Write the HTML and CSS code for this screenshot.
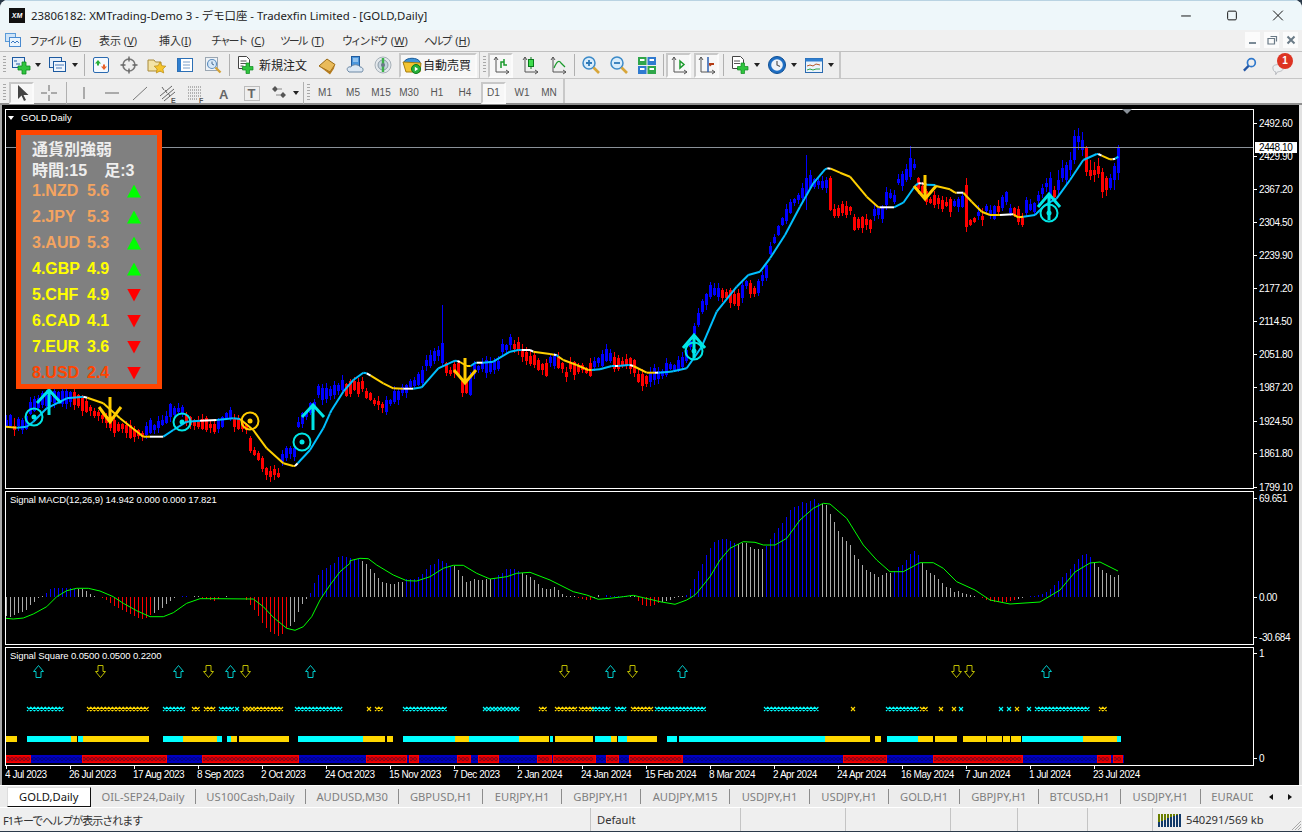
FILE: index.html
```html
<!DOCTYPE html>
<html lang="ja">
<head>
<meta charset="utf-8">
<title>MetaTrader</title>
<link rel="stylesheet" href="styles.css">
</head>
<body>
<div class="win">
  <header class="titlebar">
    <span class="applogo">XM</span>
    <span class="wintitle">23806182: XMTrading-Demo 3 - デモ口座 - Tradexfin Limited - [GOLD,Daily]</span>
    <div class="wincontrols">
      <svg class="winbtn" viewBox="0 0 46 30"><path d="M18 15.5h10" stroke="#111" fill="none"/></svg>
      <svg class="winbtn" viewBox="0 0 46 30"><rect x="18.5" y="10.5" width="9" height="9" rx="1.2" stroke="#111" fill="none"/></svg>
      <svg class="winbtn" viewBox="0 0 46 30"><path d="M18 10l10 10M28 10l-10 10" stroke="#111" fill="none"/></svg>
    </div>
  </header>

  <nav class="menubar">
    <svg class="menuicon" viewBox="0 0 16 16"><rect x=".5" y="1.5" width="10" height="8" fill="#cfe3f7" stroke="#5a9ad8"/><rect x="4.5" y="5.5" width="11" height="9" fill="#eaf4fd" stroke="#4a8ad0"/><path d="M6 11l2-2 2 2 2-2 2 2" stroke="#3a78c0" fill="none"/></svg>
    <span class="menuitem m-file"><span class="kana">ファイル</span> (<u>F</u>)</span>
    <span class="menuitem m-view">表示 (<u>V</u>)</span>
    <span class="menuitem m-ins">挿入(<u>I</u>)</span>
    <span class="menuitem m-chart"><span class="kana">チャート</span> (<u>C</u>)</span>
    <span class="menuitem m-tool"><span class="kana">ツール</span> (<u>T</u>)</span>
    <span class="menuitem m-wnd"><span class="kana">ウィンドウ</span> (<u>W</u>)</span>
    <span class="menuitem m-help"><span class="kana">ヘルプ</span> (<u>H</u>)</span>
    <div class="mdibtns">
      <span class="mdibtn"><svg viewBox="0 0 14 14"><rect x="3" y="9" width="7" height="2" fill="#7a8a96"/></svg></span>
      <span class="mdibtn"><svg viewBox="0 0 14 14"><path d="M5.5 3.5h6v5M3 5.5h6.500v5.500H3z" fill="none" stroke="#6a7a86" stroke-width="1.200"/></svg></span>
      <span class="mdibtn"><svg viewBox="0 0 14 14"><path d="M3.500 3.500l7 7M10.500 3.500l-7 7" stroke="#6a7a86" stroke-width="2"/></svg></span>
    </div>
  </nav>

  <div class="tbrow row1">
    <div class="tbgroup g1">
      <span class="grip"></span>
      <span class="tool dd"><svg class="ic" viewBox="0 0 20 20"><rect x="1.500" y="2.500" width="12" height="10" fill="#e4eefa" stroke="#1d5aa0"/><path d="M3 6h3M5 9h4" stroke="#1d5aa0"/><path d="M11 7h4v4h4v4h-4v4h-4v-4H7v-4h4z" fill="#2fc43e" stroke="#0e8a20" stroke-width=".8"/></svg><i class="caret"></i></span>
      <span class="tool dd"><svg class="ic" viewBox="0 0 20 20"><rect x="1.500" y="2.500" width="12" height="10" fill="#e4eefa" stroke="#1d5aa0"/><rect x="5.500" y="6.500" width="12" height="10" fill="#f0f6fd" stroke="#1d5aa0"/><path d="M7 10h9M8 13h6" stroke="#4a7ab8"/></svg><i class="caret"></i></span>
      <span class="sep"></span>
      <span class="tool"><svg class="ic" viewBox="0 0 20 20"><rect x="2.500" y="2.500" width="15" height="15" rx="1.500" fill="#f4f9fe" stroke="#2a6ab0"/><path d="M7 5l3 3.500H8v2H6v-2H4z" fill="#27b03a"/><path d="M13 15l-3-3.500h2v-2h2v2h2z" fill="#e8632a"/></svg></span>
      <span class="tool"><svg class="ic" viewBox="0 0 20 20"><circle cx="10" cy="10" r="6" fill="none" stroke="#777" stroke-width="1.600"/><path d="M10 1.500v5M10 13.500v5M1.500 10h5M13.500 10h5" stroke="#666" stroke-width="1.400"/></svg></span>
      <span class="tool"><svg class="ic" viewBox="0 0 20 20"><path d="M1 5h6l1.500 2H14v9H1z" fill="#f3e3a6" stroke="#a88a3a"/><path d="M13 7l1.800 3.700 4 .5-2.900 2.800.8 4-3.700-2-3.700 2 .8-4-2.900-2.800 4-.5z" fill="#f6c52d" stroke="#b88a10" stroke-width=".7"/></svg></span>
      <span class="tool"><svg class="ic" viewBox="0 0 20 20"><rect x="2.500" y="3.500" width="15" height="13" fill="#fff" stroke="#2c6fb5"/><rect x="3" y="4" width="3" height="12" fill="#2f7fd0"/><path d="M8 7h7M8 10h7M8 13h7" stroke="#7a9fc8"/></svg></span>
      <span class="tool"><svg class="ic" viewBox="0 0 20 20"><rect x="2.500" y="2.500" width="12" height="13" fill="#eef2f6" stroke="#9aa6b2"/><circle cx="9" cy="9" r="4.500" fill="#d7e8f8" stroke="#5f8fbf" stroke-width="1.200"/><path d="M9 6.500V9l2 1" stroke="#476b90" fill="none"/><path d="M12.500 12.500l5 5" stroke="#d2a23a" stroke-width="2.400"/></svg></span>
      <span class="sep"></span>
      <span class="tool order"><svg class="ic" viewBox="0 0 20 20"><path d="M3.500 1.500h8l3 3v9h-11z" fill="#fff" stroke="#444"/><path d="M5.500 6h6M5.500 8.500h6M5.500 11h3" stroke="#555"/><path d="M11 8h3.500v3.500H18V15h-3.500v3.500H11V15H7.500v-3.500H11z" fill="#2fc43e" stroke="#0e8a20" stroke-width=".7"/></svg><span class="toollabel">新規注文</span></span>
      <span class="tool"><svg class="ic" viewBox="0 0 20 20"><path d="M2 11l8-7 8 5.500-5 7.500z" fill="#e9bb5a" stroke="#9a6a14"/><path d="M2 11l11 6 5-7.500-1 4-4 6z" fill="#b47a1c"/></svg></span>
      <span class="tool"><svg class="ic" viewBox="0 0 20 20"><rect x="6.500" y="1.500" width="8" height="9" fill="#4a96dc" stroke="#1e5a9e"/><path d="M8 4h5M8 6h5" stroke="#d6ecff"/><path d="M3 16c-2-2 0-5 3-4 1-3 8-3 9 0 3 0 4 3 2 5H4z" fill="#dbe7f3" stroke="#6c88a4"/></svg></span>
      <span class="tool"><svg class="ic" viewBox="0 0 20 20"><circle cx="10" cy="10" r="8" fill="#e3e8ec" stroke="#a6b0b8"/><circle cx="10" cy="10" r="5" fill="#c4d2dc" stroke="#8c9aa6"/><path d="M10 3v14" stroke="#3db24a" stroke-width="2.400"/><circle cx="10" cy="10" r="2" fill="#6a7a88"/></svg></span>
      <span class="tool pressed auto"><svg class="ic" viewBox="0 0 20 20"><path d="M2 7c2-5 14-5 16 0v3H2z" fill="#3e93d8" stroke="#1c5c9a"/><path d="M1 7l18 1-1 9H4z" fill="#f3c532" stroke="#a77f10"/><circle cx="14" cy="14" r="4.500" fill="#27b03a" stroke="#0e7a1e"/><path d="M12.800 11.800l3.400 2.200-3.400 2.200z" fill="#fff"/></svg><span class="toollabel">自動売買</span></span>
    </div>
    <div class="tbgroup g2">
      <span class="grip"></span>
      <span class="tool pressed narrow"><svg class="ic" viewBox="0 0 20 20"><path d="M5 2v15h13" stroke="#555" fill="none"/><path d="M3 5l2-3 2 3M15 15l3 2-3 2" fill="none" stroke="#555"/><path d="M10 13V7h3M13 4v6h3" stroke="#1a9a2c" stroke-width="1.500" fill="none"/></svg></span>
      <span class="tool"><svg class="ic" viewBox="0 0 20 20"><path d="M5 2v15h13" stroke="#555" fill="none"/><path d="M3 5l2-3 2 3M15 15l3 2-3 2" fill="none" stroke="#555"/><path d="M11 2v12" stroke="#0a7a1c"/><rect x="8.500" y="4.500" width="5" height="7" fill="#3fdc4d" stroke="#0a7a1c"/></svg></span>
      <span class="tool"><svg class="ic" viewBox="0 0 20 20"><path d="M5 2v15h13" stroke="#555" fill="none"/><path d="M3 5l2-3 2 3M15 15l3 2-3 2" fill="none" stroke="#555"/><path d="M6 13c3-7 5-8 7-5l4 4" stroke="#1a9a2c" stroke-width="1.200" fill="none"/></svg></span>
      <span class="sep"></span>
      <span class="tool"><svg class="ic" viewBox="0 0 20 20"><circle cx="8" cy="8" r="6" fill="#d8ecfb" stroke="#3c8ac8" stroke-width="1.500"/><path d="M5 8h6M8 5v6" stroke="#2f7ab8" stroke-width="1.800"/><path d="M12.500 12.500l5.500 5.500" stroke="#d8a63a" stroke-width="2.600"/></svg></span>
      <span class="tool"><svg class="ic" viewBox="0 0 20 20"><circle cx="8" cy="8" r="6" fill="#d8ecfb" stroke="#3c8ac8" stroke-width="1.500"/><path d="M5 8h6" stroke="#2f7ab8" stroke-width="1.800"/><path d="M12.500 12.500l5.500 5.500" stroke="#d8a63a" stroke-width="2.600"/></svg></span>
      <span class="tool"><svg class="ic" viewBox="0 0 20 20"><rect x="1" y="2" width="8.500" height="8" fill="#2fa64a"/><rect x="10.500" y="2" width="8.500" height="8" fill="#2f7ad0"/><rect x="1" y="11" width="8.500" height="8" fill="#2f7ad0"/><rect x="10.500" y="11" width="8.500" height="8" fill="#2fa64a"/><path d="M3 5h4.500M12.500 5H17M3 14h4.500M12.500 14H17" stroke="#fff" stroke-width="2"/></svg></span>
      <span class="sep"></span>
      <span class="tool pressed narrow"><svg class="ic" viewBox="0 0 20 20"><path d="M5 2v15h13" stroke="#555" fill="none"/><path d="M3 5l2-3 2 3M15 15l3 2-3 2" fill="none" stroke="#555"/><path d="M11 6l4 3.500-4 3.500z" fill="none" stroke="#1a9a2c" stroke-width="1.500"/></svg></span>
      <span class="tool pressed narrow wide1"><svg class="ic" viewBox="0 0 20 20"><path d="M4 2v15h14" stroke="#555" fill="none"/><path d="M2 5l2-3 2 3M15 15l3 2-3 2" fill="none" stroke="#555"/><path d="M11 2v15" stroke="#2c5fb0" stroke-width="1.500"/><path d="M17 8l-4 3.500-1-1.500z" fill="#b43c14"/><path d="M12 9h5" stroke="#b43c14" stroke-width="2"/></svg></span>
      <span class="sep sep2"></span>
      <span class="tool dd"><svg class="ic" viewBox="0 0 20 20"><path d="M2.500 1.500h8l3 3v9h-11z" fill="#fff" stroke="#444"/><path d="M4 6h6M4 8.500h6" stroke="#555"/><path d="M11 8h3.500v3.500H18V15h-3.500v3.500H11V15H7.500v-3.500H11z" fill="#2fc43e" stroke="#0e8a20" stroke-width=".7"/></svg><i class="caret"></i></span>
      <span class="tool dd"><svg class="ic" viewBox="0 0 20 20"><circle cx="10" cy="10" r="8.500" fill="#1f6fc4" stroke="#0f4f94"/><circle cx="10" cy="10" r="5.800" fill="#eef3f8"/><path d="M10 6v4l3 1.500" stroke="#555" fill="none" stroke-width="1.200"/></svg><i class="caret"></i></span>
      <span class="tool dd"><svg class="ic" viewBox="0 0 20 20"><rect x="1.500" y="3.500" width="17" height="14" fill="#eaf3fb" stroke="#2a6ab0"/><rect x="1.500" y="3.500" width="17" height="3" fill="#2f7fd0"/><path d="M3 11l3-1 3 1 3-2 4 1" stroke="#b4582a" fill="none"/><path d="M3 15l3-1 3 1 3-1 4 0" stroke="#2fa64a" fill="none"/></svg><i class="caret"></i></span>
    </div>
    <div class="rightcluster">
      <svg class="searchic" viewBox="0 0 16 16"><circle cx="10" cy="6" r="4.200" fill="none" stroke="#2f78cc" stroke-width="1.800"/><path d="M7 9.500l-5 5" stroke="#2456a4" stroke-width="2.400"/></svg>
      <span class="notify">
        <svg class="bubble" viewBox="0 0 16 14"><path d="M2 5c0-3 9-4 11 0 1 4-4 5-6 5l-2 3v-3C3 10 2 8 2 5z" fill="#eef0f2" stroke="#b4b8bc"/></svg>
        <span class="badge">1</span>
      </span>
    </div>
  </div>

  <div class="tbrow row2">
    <div class="tbgroup g3">
      <span class="grip"></span>
      <span class="tool pressed narrow cursor"><svg class="ic" viewBox="0 0 20 20"><path d="M6 2l0 14 3.500-3.500 2.500 5.500 2-1-2.500-5h5z" fill="#444"/></svg></span>
      <span class="tool"><svg class="ic" viewBox="0 0 20 20"><path d="M10 2v6M10 12v6M2 10h6M12 10h6" stroke="#666"/></svg></span>
      <span class="sep sep4"></span>
      <span class="tool"><svg class="ic" viewBox="0 0 20 20"><path d="M10 4v12" stroke="#666"/></svg></span>
      <span class="tool"><svg class="ic" viewBox="0 0 20 20"><path d="M3 10h14" stroke="#666"/></svg></span>
      <span class="tool"><svg class="ic" viewBox="0 0 20 20"><path d="M3 17L17 4" stroke="#777"/></svg></span>
      <span class="tool"><svg class="ic" viewBox="0 0 20 20"><path d="M2 13L14 3M4 16L16 6M6 18L17 9M4 4l2 3M7 7l2 3M10 10l2 3" stroke="#666" fill="none"/><text x="13" y="20" class="ictext">E</text></svg></span>
      <span class="tool"><svg class="ic" viewBox="0 0 20 20"><path d="M2 4h13M2 7h13M2 10h13M2 13h13M2 16h9" stroke="#777" stroke-dasharray="1 1"/><text x="13" y="20" class="ictext">F</text></svg></span>
      <span class="tool"><svg class="ic" viewBox="0 0 20 20"><text x="5" y="15.500" class="icA">A</text></svg></span>
      <span class="tool"><svg class="ic" viewBox="0 0 20 20"><rect x="2.500" y="3.500" width="15" height="14" fill="none" stroke="#888" stroke-dasharray="1 1"/><text x="5.500" y="15" class="icA">T</text></svg></span>
      <span class="tool dd2"><svg class="ic" viewBox="0 0 20 20"><path d="M5 3l3 3-3 3-3-3zM13 9l3 3-3 3-3-3z" fill="#555"/><path d="M8 6h4M10 12H6" stroke="#888"/></svg><i class="caret"></i></span>
      <span class="sep"></span>
      <span class="grip grip2"></span>
      <span class="tf">M1</span><span class="tf">M5</span><span class="tf">M15</span><span class="tf">M30</span><span class="tf">H1</span><span class="tf">H4</span>
      <span class="tf pressed narrow tfd">D1</span><span class="tf">W1</span><span class="tf tfm">MN</span>
    </div>
  </div>

  <main class="workspace">
    <section class="pane main-pane">
      <div class="plot"><svg id="mainplot" class="plotsvg" viewBox="6 110 1247 378"></svg></div>
      <svg id="mainaxis" class="axissvg" viewBox="1254 109 45 380"></svg>
      <div class="charthead"><i class="headcaret"></i>GOLD,Daily</div>
      <svg class="shiftmark" viewBox="0 0 10 6"><path d="M0 0h10L5 5z" fill="#8a9199"/></svg>
      <aside class="strength">
        <div class="st-title">通貨別強弱</div>
        <div class="st-meta"><span>時間:15</span><span>足:3</span></div>
        <div class="st-row c-sand"><span>1.NZD</span><span>5.6</span><i class="up"></i></div>
        <div class="st-row c-sand"><span>2.JPY</span><span>5.3</span><i class="up"></i></div>
        <div class="st-row c-sand"><span>3.AUD</span><span>5.3</span><i class="up"></i></div>
        <div class="st-row c-yel"><span>4.GBP</span><span>4.9</span><i class="up"></i></div>
        <div class="st-row c-yel"><span>5.CHF</span><span>4.9</span><i class="down"></i></div>
        <div class="st-row c-yel"><span>6.CAD</span><span>4.1</span><i class="down"></i></div>
        <div class="st-row c-yel"><span>7.EUR</span><span>3.6</span><i class="down"></i></div>
        <div class="st-row c-red"><span>8.USD</span><span>2.4</span><i class="down"></i></div>
      </aside>
    </section>
    <section class="pane macd-pane">
      <div class="plot"><svg id="macdplot" class="plotsvg" viewBox="6 492 1247 152"></svg></div>
      <svg id="macdaxis" class="axissvg" viewBox="1254 491 45 154"></svg>
      <div class="panelabel">Signal MACD(12,26,9) 14.942 0.000 0.000 17.821</div>
    </section>
    <section class="pane sig-pane">
      <div class="plot"><svg id="sigplot" class="plotsvg" viewBox="6 648 1247 117"></svg></div>
      <svg id="sigaxis" class="axissvg" viewBox="1254 647 45 119"></svg>
      <div class="panelabel">Signal Square 0.0500 0.0500 0.2200</div>
    </section>
    <svg id="xaxis" class="xaxis" viewBox="5 766 1294 19"></svg>
  </main>

  <div class="tabbar">
    <span class="tab active">GOLD,Daily</span>
    <span class="tab">OIL-SEP24,Daily</span>
    <span class="tab">US100Cash,Daily</span>
    <span class="tab">AUDUSD,M30</span>
    <span class="tab">GBPUSD,H1</span>
    <span class="tab j">EURJPY,H1</span>
    <span class="tab j">GBPJPY,H1</span>
    <span class="tab j">AUDJPY,M15</span>
    <span class="tab j">USDJPY,H1</span>
    <span class="tab j">USDJPY,H1</span>
    <span class="tab">GOLD,H1</span>
    <span class="tab j">GBPJPY,H1</span>
    <span class="tab">BTCUSD,H1</span>
    <span class="tab j">USDJPY,H1</span>
    <span class="tab clipped">EURAUD</span>
    <span class="tabnav"><i class="tl"></i><i class="tr"></i></span>
  </div>

  <footer class="statusbar">
    <span class="st s-help">F1キーでヘルプが表示されます</span>
    <span class="st s-def">Default</span>
    <span class="st s-a"></span>
    <span class="st s-b"></span>
    <span class="st s-c"></span>
    <span class="st s-d"></span>
    <span class="st s-e"></span>
    <span class="st s-conn">
      <svg class="connbars" viewBox="0 0 24 14"><g id="conn"></g></svg>
      540291/569 kb
    </span>
    <svg class="sizegrip" viewBox="0 0 12 12"><path d="M11 2L2 11M11 5l-6 6M11 8l-3 3" stroke="#a8a8a8"/></svg>
  </footer>
</div>
<script src="chart.js"></script>
</body>
</html>
```
FILE: styles.css
```css
* { box-sizing: border-box; }
html, body { margin: 0; padding: 0; }
body {
  width: 1302px; height: 832px; overflow: hidden;
  background: #2b3a4a;
  font-family: "Noto Sans", "Noto Sans CJK JP", sans-serif;
}
.win {
  width: 1302px; height: 831px;
  display: flex; flex-direction: column;
  background: #eeeeee;
  border-radius: 8px 8px 0 0;
  overflow: hidden;
}

/* title bar */
.titlebar {
  height: 30px; flex: none;
  display: flex; align-items: center;
  padding: 0 0 1px 9px;
  background: #eef7fa;
  border-top: 1px solid #b9d3e2;
}
.applogo {
  width: 16px; height: 15px;
  background: #111; color: #fff;
  font: italic 700 7px/15px "Liberation Sans", sans-serif;
  text-align: center;
}
.wintitle { margin-left: 6px; font-size: 11.4px; color: #222; white-space: nowrap; }
.wincontrols { margin-left: auto; display: flex; margin-right: 1px; }
.winbtn { width: 46px; height: 29px; display: block; }

/* menu */
.menubar {
  height: 22px; flex: none;
  display: flex; align-items: center;
  padding-bottom: 1px;
  background: #f0f0f0;
  font-size: 11px; color: #333;
  border-bottom: 1px solid #c0c0c0;
}
.menuicon { width: 16px; height: 16px; margin-left: 5px; }
.menuitem { white-space: nowrap; }
.kana { letter-spacing: -2.2px; margin-right: 2px; }
.m-file { margin-left: 8px; width: 70px; }
.m-view { width: 60px; }
.m-ins { width: 52px; }
.m-chart { width: 69px; }
.m-tool { width: 62px; }
.m-wnd { width: 82px; }
.mdibtns { margin-left: auto; margin-right: 4px; display: flex; gap: 4px; }
.mdibtn { width: 15px; height: 16px; background: #fbfbfb; display: flex; align-items: center; justify-content: center; }
.mdibtn svg { width: 14px; height: 14px; }

/* toolbars */
.tbrow { flex: none; display: flex; background: #eeeeee; }
.row1 { height: 27px; border-bottom: 1px solid #c6c6c6; }
.row2 { height: 26px; border-bottom: 2px solid #8e8e8e; }
.tbgroup { display: flex; align-items: center; height: 100%; }
.g1 { width: 480px; border-right: 1px solid #c8c8c8; }
.g2 { width: 361px; border-right: 2px solid #c8c8c8; }
.g3 { width: 565px; border-right: 2px solid #c8c8c8; padding-top: 3px; }
.grip {
  width: 8px; height: 18px; flex: none;
  background: repeating-linear-gradient(#a8a8a8 0 1px, transparent 1px 3px) 3px 0 / 3px 100% no-repeat;
}
.grip2 { width: 5px; background-position: 1px 0; }
.tool {
  width: 28px; height: 25px; flex: none;
  display: flex; align-items: center; justify-content: center;
  position: relative;
}
.row2 .tool, .row2 .tf { height: 22px; }
.ic { width: 20px; height: 20px; display: block; flex: none; }
.ictext { font: 700 7px "Liberation Sans", sans-serif; fill: #555; }
.icA { font: 700 13px "Liberation Sans", sans-serif; fill: #666; }
.dd { width: 37px; justify-content: flex-start; padding-left: 3px; gap: 4px; }
.dd2 { width: 35px; justify-content: flex-start; padding-left: 4px; gap: 3px; }
.caret { width: 0; height: 0; border: 3.500px solid transparent; border-top: 4px solid #222; border-bottom: 0; flex: none; }
.sep { width: 5px; height: 22px; flex: none; background: linear-gradient(#b0b0b0,#b0b0b0) 2px 0 / 1px 100% no-repeat; }
.sep2 { width: 8px; background-position: 4px 0; }
.sep4 { width: 7px; background-position: 3px 0; }
.order { width: 81px; justify-content: flex-start; padding-left: 3px; gap: 4px; }
.toollabel { font-size: 12px; color: #222; white-space: nowrap; }
.pressed {
  background: #f7f7f7;
  border: 2px solid; border-color: #c8c8c8 #fbfbfb #fbfbfb #c8c8c8;
}
.narrow { width: 25px; margin-right: 3px; }
.cursor { margin-left: 1px; margin-right: 1px; }
.wide1 { margin-right: 0; }
.auto { width: 78px; margin-left: 2px; justify-content: flex-start; padding-left: 1px; gap: 1px; }
.tf {
  width: 28px; height: 25px; flex: none;
  display: flex; align-items: center; justify-content: center;
  font: 10px "Liberation Sans", sans-serif; color: #555;
}
.tfd { width: 25px; margin-left: 2px; margin-right: 2px; }
.tfm { margin-left: -1px; }
.rightcluster { margin-left: auto; display: flex; align-items: center; height: 25px; }
.searchic { width: 15px; height: 15px; margin-right: 14px; }
.notify { width: 26px; height: 24px; position: relative; margin-right: 5px; display: block; }
.bubble { position: absolute; left: 0; top: 9px; width: 15px; height: 14px; }
.badge {
  position: absolute; left: 6px; top: 0;
  width: 16px; height: 16px; border-radius: 50%;
  background: #dd3322; color: #fff;
  font: 700 10px/16px "Liberation Sans", sans-serif; text-align: center;
}

/* workspace */
.workspace {
  flex: none; height: 680px;
  background: #000;
  padding: 4px 0 0 3px;
  border-left: 2px solid #a8a8a8;
  border-right: 3px solid #e2e2e2;
  display: flex; flex-direction: column; gap: 2px;
}
.pane { display: flex; position: relative; flex: none; }
.main-pane { height: 380px; }
.macd-pane { height: 154px; }
.sig-pane { height: 119px; }
.plot { width: 1249px; height: 100%; border: 1px solid #fff; flex: none; }
.plotsvg { display: block; width: 100%; height: 100%; }
.axissvg { width: 45px; height: 100%; display: block; flex: none; overflow: visible; }
.xaxis { width: 1294px; height: 19px; display: block; flex: none; margin-top: -2px; }
.axislabel { font: 10px "Liberation Sans", sans-serif; fill: #fff; letter-spacing: -.4px; }
.taglabel { fill: #000; }
.datelabel { font: 10px "Liberation Sans", sans-serif; fill: #fff; letter-spacing: -.45px; }
.charthead {
  position: absolute; left: 3px; top: 3px;
  font: 9.500px/12px "Liberation Sans", sans-serif; color: #fff;
  display: flex; align-items: center; gap: 7px;
}
.headcaret { width: 0; height: 0; border: 3px solid transparent; border-top: 4px solid #fff; border-bottom: 0; }
.shiftmark { position: absolute; left: 1117px; top: 0; width: 10px; height: 6px; }
.panelabel {
  position: absolute; left: 5px; top: 3px;
  font: 9.500px/12px "Liberation Sans", sans-serif; color: #fff; letter-spacing: -.1px;
  white-space: nowrap;
}

/* currency strength panel */
.strength {
  position: absolute; left: 11px; top: 21px;
  width: 146px; height: 259px;
  background: #808080; border: 5px solid #ff4500;
  padding: 5px 0 0 11px;
  font: 700 16px/20px "Liberation Sans", "Noto Sans CJK JP", sans-serif;
}
.st-title { height: 20px; color: #eeeeee; white-space: nowrap; }
.st-meta { margin-top: 2px; height: 16px; line-height: 18px; color: #eeeeee; display: flex; gap: 17px; }
.st-row { height: 26px; display: grid; grid-template-columns: 55px 40px 14px; align-items: center; white-space: nowrap; }
.c-sand { color: #f4a460; }
.c-yel { color: #ffff00; }
.c-red { color: #ff4500; }
.up, .down { width: 14px; height: 13px; display: block; }
.up { background: #00ff00; clip-path: polygon(50% 0, 100% 100%, 0 100%); }
.down { background: #ff0000; clip-path: polygon(0 0, 100% 0, 50% 100%); }

/* tabs */
.tabbar {
  height: 23px; flex: none;
  display: flex; align-items: center;
  padding-left: 7px;
  background: #ececec;
  border-top: 1px solid #fff;
  border-bottom: 1px solid #fff;
  font-size: 11.2px; color: #808080;
  overflow: hidden; position: relative;
}
.tab { height: 15px; line-height: 15px; padding: 0 10.500px; border-right: 1px solid #8c8c8c; white-space: nowrap; flex: none; }
.tab.j { padding: 0 11.500px; }
.tab.active { height: 20px; line-height: 18px; width: 84px; padding: 0 11px; background: #fff; color: #111; border: 1px solid #111; border-top: 1px solid #ddd; border-left-color: #ddd; }
.clipped { border-right: 0; width: 52px; overflow: hidden; padding-right: 0; }
.tabnav { position: absolute; left: 1263px; top: 0; width: 39px; height: 21px; background: #ececec; display: flex; align-items: center; }
.tl, .tr { width: 0; height: 0; border: 3.500px solid transparent; }
.tl { border-right: 4px solid #111; border-left: 0; margin-left: 6px; }
.tr { border-left: 4px solid #111; border-right: 0; margin-left: 15px; }

/* status */
.statusbar {
  flex: none; height: 23px;
  display: flex; align-items: center;
  font-size: 11.2px; color: #333;
  background: #efefef;
  position: relative;
}
.st { height: 100%; display: flex; align-items: center; white-space: nowrap; flex: none; border-right: 1px solid #c4c4c4; }
.s-help { width: 591px; padding-left: 3px; letter-spacing: -1px; font-size: 11px; }
.s-def { width: 150px; padding-left: 6px; }
.s-a { width: 105px; }
.s-b { width: 105px; }
.s-c { width: 67px; }
.s-d { width: 70px; }
.s-e { width: 65px; }
.s-conn { padding-left: 5px; gap: 4px; border-right: 0; }
.connbars { width: 24px; height: 14px; display: block; }
.sizegrip { position: absolute; right: 0; bottom: 0; width: 12px; height: 12px; }
```
FILE: chart.js
```js
(function () {
  function Z(ox, oy, pts) {
    return pts.map(function (p) { return [p[0], ox + p[1] / 3, oy + p[2] / 3]; });
  }
  function rnd(seed) {
    var s = seed;
    return function () { s = (s * 1664525 + 1013904223) % 4294967296; return s / 4294967296; };
  }
  function rect(x, y, w, h, fill) {
    return '<rect x="' + x + '" y="' + y + '" width="' + w + '" height="' + h + '" fill="' + fill + '" shape-rendering="crispEdges"/>';
  }
  function poly(pts, stroke, w) {
    return '<path d="M' + pts.map(function (p) { return p[0].toFixed(1) + ' ' + p[1].toFixed(1); }).join('L') +
      '" fill="none" stroke="' + stroke + '" stroke-width="' + w + '" stroke-linejoin="round"/>';
  }
  function text(x, y, s, cls) {
    return '<text x="' + x + '" y="' + y + '" class="' + cls + '">' + s + '</text>';
  }

  /* ---------- candles ---------- */
  var BLUE = '#0000ff', RED = '#ff0000';
  var segs = [
    [6, 18, 421, 421, 'b'], [18, 28, 425, 420, 'b'], [30, 40, 408, 402, 'b'], [42, 72, 400, 396, 'b'],
    [74, 76, 400, 400, 'r'], [78, 88, 401, 408, 'r'], [90, 108, 410, 422, 'r'], [110, 144, 423, 437, 'r'],
    [146, 166, 430, 420, 'b'], [170, 182, 412, 410, 'b'], [186, 216, 420, 428, 'r'], [218, 232, 424, 412, 'b'],
    [234, 248, 421, 428, 'r'], [250, 264, 445, 465, 'r'], [266, 280, 472, 474, 'r'], [282, 296, 457, 450, 'b'],
    [298, 316, 425, 400, 'b'], [318, 328, 392, 394, 'b'], [330, 334, 392, 392, 'b'], [336, 344, 388, 385, 'b'],
    [346, 364, 388, 386, 'r'], [366, 384, 395, 408, 'r'], [386, 394, 405, 395, 'b'], [394, 406, 398, 388, 'b'],
    [406, 424, 385, 378, 'b'], [426, 440, 365, 352, 'b'], [442, 442, 353, 353, 'b'], [444, 460, 370, 370, 'r'],
    [462, 468, 388, 388, 'r'], [470, 470, 386, 386, 'b'], [474, 496, 367, 365, 'b'], [500, 510, 352, 342, 'b'],
    [512, 520, 347, 347, 'r'], [522, 546, 355, 368, 'r'], [550, 554, 360, 360, 'b'], [558, 566, 362, 373, 'r'],
    [570, 590, 367, 370, 'r'], [594, 610, 363, 355, 'b'], [614, 634, 363, 365, 'r'], [638, 648, 380, 380, 'r'],
    [650, 684, 377, 362, 'b'], [686, 696, 355, 323, 'b'], [698, 710, 317, 290, 'b'], [714, 720, 292, 292, 'b'],
    [722, 740, 295, 300, 'r'], [742, 746, 292, 283, 'b'], [748, 756, 290, 290, 'r'], [758, 766, 286, 270, 'b'],
    [770, 786, 250, 213, 'b'], [790, 806, 207, 190, 'b'], [810, 826, 183, 183, 'b'], [834, 852, 213, 207, 'r'],
    [854, 870, 223, 223, 'r'], [872, 884, 213, 213, 'b'], [886, 896, 197, 197, 'b'], [898, 914, 183, 165, 'b'],
    [918, 930, 183, 203, 'r'], [930, 950, 200, 206, 'r'], [954, 962, 202, 202, 'b'], [970, 976, 222, 222, 'r'],
    [986, 994, 210, 212, 'b'], [1002, 1006, 202, 198, 'b'], [1014, 1022, 212, 222, 'r'], [1026, 1034, 208, 208, 'b'],
    [1038, 1046, 198, 185, 'b']
  ];
  var special = {
    14: ['r', 426, 430, 418, 436], 74: ['r', 392, 405, 388, 410], 442: ['b', 343, 363, 305, 366],
    470: ['b', 377, 395, 372, 396], 830: ['r', 178, 210, 176, 211], 806: ['b', 178, 195, 155, 210],
    910: ['b', 158, 177, 146, 180], 966: ['r', 185, 227, 178, 232], 978: ['b', 212, 216, 205, 220],
    982: ['r', 216, 220, 208, 226], 998: ['r', 206, 212, 200, 216], 1010: ['b', 208, 213, 204, 216],
    1050: ['b', 178, 196, 172, 200], 1054: ['r', 190, 197, 186, 202], 1058: ['b', 180, 190, 170, 196],
    1062: ['b', 168, 178, 160, 182], 1066: ['b', 165, 180, 162, 186], 1070: ['b', 160, 170, 152, 176],
    1074: ['b', 136, 160, 130, 164], 1078: ['b', 136, 142, 128, 150], 1082: ['b', 140, 150, 132, 156],
    1086: ['r', 148, 172, 146, 176], 1090: ['r', 170, 176, 160, 180], 1094: ['r', 170, 175, 162, 182],
    1098: ['r', 166, 174, 158, 178], 1102: ['r', 172, 192, 168, 198], 1106: ['r', 178, 190, 176, 196],
    1110: ['b', 178, 188, 174, 190], 1114: ['b', 166, 180, 163, 190], 1118: ['b', 147, 173, 145, 180]
  };
  var r = rnd(41), main = '';
  var last = segs[0];
  for (var i = 0; i < 279; i++) {
    var x = 6 + 4 * i, sp = special[x], col, top, bot, hi, lo;
    if (sp) { col = sp[0]; top = sp[1]; bot = sp[2]; hi = sp[3]; lo = sp[4]; }
    else {
      var g = null;
      for (var k = 0; k < segs.length; k++) { if (x >= segs[k][0] && x <= segs[k][1]) { g = segs[k]; break; } }
      if (!g) g = last; else last = g;
      var t = g[1] === g[0] ? 0 : (x - g[0]) / (g[1] - g[0]);
      var cy = Math.min(Math.max(t, 0), 1) * (g[3] - g[2]) + g[2];
      col = g[4];
      var bh = 4 + Math.floor(r() * 10);
      top = Math.round(cy - bh / 2 + (r() - .5) * 4); bot = top + bh;
      hi = top - 1 - Math.floor(r() * 5); lo = bot + 1 + Math.floor(r() * 5);
    }
    var c = col === 'b' ? BLUE : RED;
    main += rect(x, hi, 1, lo - hi, c) + rect(x - 1, top, 3, bot - top, c);
  }

  /* ---------- moving average ---------- */
  var ma = [].concat(
    Z(0, 105, [['y',18,965],['c',50,968],['c',80,965],['c',100,950],['c',140,910],['c',200,880],['w',250,875],['y',262,878],['y',310,895],['y',360,940],['y',430,995],['w',450,995],['c',490,995],['c',520,975],['c',560,950],['w',600,947],['c',650,945],['c',700,940],['y',720,942],['y',760,975],['y',800,1030],['y',850,1075],['y',880,1083],['w',885,1083],['c',893,1075],['c',930,1035],['c',970,970],['c',990,925]]),
    Z(300, 280, [['c',95,390],['c',130,335],['c',160,300],['c',190,278],['w',200,280],['y',212,287],['y',250,310],['y',280,325],['w',310,326],['c',340,326],['c',365,322],['c',415,265],['c',465,242],['w',472,243],['y',480,246],['y',500,258],['c',512,258],['c',525,249],['w',530,248],['c',548,248],['c',580,245],['c',630,215],['c',655,210],['w',665,210],['w',690,210],['y',700,215],['y',750,222],['w',762,224],['c',770,225],['y',775,230],['y',790,240],['y',830,255],['y',865,270],['c',875,270],['c',900,268],['c',935,258],['w',945,258],['c',955,258],['c',985,255],['w',990,255],['y',1000,258],['y',1040,278],['w',1065,278],['c',1075,278],['c',1110,275]]),
    Z(640, 110, [['c',100,784],['c',140,775],['c',185,710],['c',230,605],['c',290,530],['c',325,495],['c',360,485],['c',390,445],['c',435,375],['c',480,290],['c',520,220],['c',555,178],['w',562,175],['y',572,176],['y',600,188],['y',630,200],['y',680,260],['y',715,292],['w',720,292],['c',762,292],['c',790,278],['c',825,228],['w',835,220],['w',845,220],['c',860,224],['c',885,225]]),
    Z(930, 110, [['y',18,228],['y',60,238],['y',75,248],['w',80,248],['y',100,248],['y',125,275],['y',155,305],['y',180,315],['w',210,315],['y',250,313],['y',265,322],['c',280,320],['c',315,315],['c',345,285],['c',380,265],['c',420,210],['c',460,150],['c',500,132],['w',505,132],['y',515,137],['y',540,148],['w',548,148],['c',556,146],['c',565,140]])
  );
  var macol = { c: '#00bfff', y: '#ffd000', w: '#ffffff' };
  for (var m = 0; m < ma.length - 1; m++) {
    main += poly([[ma[m][1], ma[m][2]], [ma[m + 1][1], ma[m + 1][2]]], macol[ma[m][0]], 2);
  }

  /* grey price line */
  main += rect(6, 147, 1247, 1, '#8a9199');

  /* arrows and circles */
  function circ(x, y, col) {
    return '<circle cx="' + x + '" cy="' + y + '" r="8.500" fill="none" stroke="' + col + '" stroke-width="2"/>' +
      '<circle cx="' + x + '" cy="' + y + '" r="2.500" fill="' + col + '"/>';
  }
  function arrow(x, tip, wing, end, dx, col) {
    return '<path d="M' + x + ' ' + end + 'L' + x + ' ' + tip + 'M' + (x - dx) + ' ' + wing + 'L' + x + ' ' + tip + 'L' + (x + dx) + ' ' + wing +
      '" fill="none" stroke="' + col + '" stroke-width="3"/>';
  }
  var CY = '#00e6e6', GO = '#ffcc00';
  main += arrow(49, 390, 403, 415, 12, CY) + arrow(313, 405, 417, 430, 11, CY) + arrow(694, 335, 348, 358, 11, CY) + arrow(1049, 194, 207, 220, 11, CY);
  main += arrow(110, 422, 407, 397, 11, GO) + arrow(465, 383, 370, 358, 11, GO) + arrow(925, 199, 186, 175, 11, GO);
  main += circ(34, 417, CY) + circ(182, 422, CY) + circ(250, 421, GO) + circ(302, 442, CY) + circ(694, 351, CY) + circ(1049, 213, CY);
  document.getElementById('mainplot').innerHTML = main;

  /* main axis */
  var ax = '', px = [['2492.60',123],['2429.90',156],['2367.20',189],['2304.50',222],['2239.90',255],['2177.20',288],['2114.50',321],['2051.80',354],['1987.20',387],['1924.50',421],['1861.80',453],['1799.10',487]];
  px.forEach(function (p) { ax += rect(1254, p[1], 3, 1, '#fff') + text(1259, p[1] + 4, p[0], 'axislabel'); });
  ax += rect(1255, 142, 42, 11, '#fff') + text(1259, 151, '2448.10', 'axislabel taglabel');
  document.getElementById('mainaxis').innerHTML = ax;

  /* ---------- MACD ---------- */
  var hist = [
    -19,-20,-18,-16,-15,-13,-8,-5,-1,1,4,8,9,9,9,9,9,8,8,8,6,3,1,0,-1,-3,-6,-9,-11,-13,-15,-17,-19,-21,-22,-21,-18,-16,-13,-11,-7,-4,-1,0,1,1,0,1,1,-1,-2,-3,-4,-2,0,1,0,0,0,0,
    -3,-8,-13,-19,-26,-31,-35,-37,-39,-37,-31,-29,-25,-15,-7,-2,4,14,22,27,29,32,34,40,41,40,
    39,38,38,36,33,28,24,19,15,14,13,13,15,15,18,18,18,20,23,28,32,33,38,36,34,31,31,27,21,15,16,18,17,17,18,18,19,22,24,28,28,28,26,24,22,20,17,13,9,8,8,10,7,3,1,1,1,-1,-2,-3,-3,-1,2,0,2,1,1,1,1,1,1,1,
    -4,-8,-9,-9,-8,-6,-5,-4,-3,-1,1,1,2,8,
    18,26,33,42,49,55,57,58,58,56,54,53,54,54,50,48,48,48,51,58,64,69,74,80,87,90,91,95,94,96,98,94,93,92,83,75,66,60,56,52,42,38,32,27,25,23,20,22,24,24,26,30,32,37,43,46,42,34,27,24,22,18,14,10,9,5,6,
    4,3,2,1,0,-1,-3,-4,-5,-5,-6,-5,-4,-3,-2,-1,0,1,1,2,3,5,8,12,16,20,24,28,33,38,42,43,40,34,30,27,24,22,20,22
  ];
  var blueRuns = [[10,17],[44,45],[76,88],[100,111],[122,128],[150,155],[170,182],[190,203],[222,228],[256,271]];
  var redRuns = [[24,36],[49,53],[60,70],[143,146],[158,163],[244,252]];
  function inRuns(i, runs) { return runs.some(function (q) { return i >= q[0] && i <= q[1]; }); }
  var ZERO = 597, md = '';
  hist.forEach(function (v, i) {
    if (!v) return;
    var c = inRuns(i, blueRuns) ? BLUE : inRuns(i, redRuns) ? RED : '#a9a9a9';
    md += v > 0 ? rect(6 + 4 * i, ZERO - v, 1, v, c) : rect(6 + 4 * i, ZERO, 1, -v, c);
  });
  var sig = [].concat(
    Z(0, 490, [[0,18,385],[0,40,387],[0,70,384],[0,100,372],[0,140,350],[0,170,320],[0,200,302],[0,230,295],[0,265,295],[0,300,303],[0,340,320],[0,370,340],[0,410,362],[0,450,380],[0,490,380],[0,520,368],[0,560,340],[0,600,326],[0,650,326],[0,760,327],[0,790,350],[0,820,382],[0,860,415],[0,885,421],[0,910,410],[0,935,380],[0,960,330],[0,990,285],[0,1020,245],[0,1050,220]]),
    Z(350, 540, [[0,0,62],[0,30,55],[0,55,56],[0,80,75],[0,130,105],[0,170,122],[0,200,123],[0,240,110],[0,280,85],[0,310,76],[0,340,76],[0,380,100],[0,420,117],[0,470,110],[0,500,100],[0,540,97],[0,600,120],[0,670,155],[0,710,165],[0,745,178],[0,780,175],[0,820,170],[0,850,166],[0,880,173],[0,930,185],[0,975,193],[0,1010,180],[0,1030,168]]),
    Z(660, 490, [[0,110,310],[0,150,260],[0,180,210],[0,210,175],[0,250,155],[0,285,157],[0,310,165],[0,345,165],[0,380,145],[0,420,90],[0,460,55],[0,490,40],[0,510,42],[0,560,85],[0,610,165],[0,650,210],[0,690,245],[0,730,245],[0,780,218],[0,820,218],[0,850,235],[0,890,275]]),
    [[0,975,590],[0,990,600],[0,1010,604],[0,1040,602],[0,1060,590],[0,1075,572],[0,1090,563],[0,1100,562],[0,1118,571]]
  );
  md += poly(sig.map(function (p) { return [p[1], p[2]]; }), '#00ff00', 1);
  document.getElementById('macdplot').innerHTML = md;

  var ma2 = '';
  [['69.651',498],['0.00',597],['-30.684',637]].forEach(function (p) { ma2 += rect(1254, p[1], 3, 1, '#fff') + text(1259, p[1] + 4, p[0], 'axislabel'); });
  document.getElementById('macdaxis').innerHTML = ma2;

  /* ---------- Signal square ---------- */
  var CYAN = '#00ffff', GOLD = '#ffd700', s = '';
  function hollowUp(cx) {
    var p = [[0,665],[5,671],[2.5,671],[2.5,677],[-2.5,677],[-2.5,671],[-5,671]];
    return '<polygon points="' + p.map(function (q) { return (cx + q[0] + .5) + ',' + (q[1] + .5); }).join(' ') + '" fill="none" stroke="#00c8c8"/>';
  }
  function hollowDown(cx) {
    var p = [[0,677],[5,671],[2.5,671],[2.5,665],[-2.5,665],[-2.5,671],[-5,671]];
    return '<polygon points="' + p.map(function (q) { return (cx + q[0] + .5) + ',' + (q[1] + .5); }).join(' ') + '" fill="none" stroke="#bcbc00"/>';
  }
  [38,178,230,310,610,682,1046].forEach(function (x) { s += hollowUp(x); });
  [100,208,245,564,632,956,969].forEach(function (x) { s += hollowDown(x); });

  var xrow = [['c',27,63],['y',87,147],['c',163,183],['y',192,200],['y',204,216],['c',219,232],['c',235,239],['y',243,283],['c',295,343],['y',367,372],['y',375,384],['c',403,448],['c',483,520],['y',539,548],['y',555,576],['y',579,592],['c',592,612],['c',615,627],['y',631,652],['c',655,706],['c',764,818],['y',851,855],['c',886,920],['y',920,928],['y',939,944],['y',952,956],['c',959,963],['c',999,1004],['c',1007,1012],['y',1015,1020],['c',1027,1032],['c',1035,1088],['y',1099,1108]];
  xrow.forEach(function (g) {
    var c = g[0] === 'c' ? CYAN : GOLD, d = '';
    for (var x = g[1]; x <= g[2] - 2; x += 3.6) { d += 'M' + x.toFixed(1) + ' 707l4 4m0 -4l-4 4'; }
    s += '<path d="' + d + '" stroke="' + c + '" stroke-width="1.100" fill="none"/>';
  });

  var bars = [['y',6,17],['c',27,71],['y',71,77],['c',78,83],['y',83,149],['c',163,183],['y',183,217],['c',217,222],['c',227,231],['y',231,237],['y',239,289],['c',298,363],['y',363,385],['y',387,393],['c',403,455],['y',455,469],['c',469,519],['y',519,549],['c',550,553],['y',555,593],['c',595,611],['y',611,617],['c',618,627],['y',627,657],['c',667,677],['c',679,825],['y',825,870],['y',875,881],['c',887,918],['y',918,933],['y',935,957],['y',963,986],['y',987,1002],['y',1003,1010],['y',1011,1021],['c',1022,1083],['y',1083,1117],['c',1117,1121]];
  bars.forEach(function (g) { s += rect(g[1], 736, g[2] - g[1], 6, g[0] === 'c' ? CYAN : GOLD); });

  s += rect(6, 755, 1118, 8, '#0000c0');
  var reds = [[6,31],[82,167],[202,299],[366,407],[409,419],[457,471],[478,499],[537,552],[553,596],[606,619],[629,683],[843,887],[933,1023],[1097,1111],[1113,1123]];
  for (var d = 6; d < 1124; d += 4) {
    s += '<circle cx="' + d + '" cy="759" r="1.500" fill="none" stroke="#000080" stroke-width="1"/>';
  }
  reds.forEach(function (g) {
    s += rect(g[0], 755, g[1] - g[0], 8, '#e00000');
    for (var x = g[0] + 2; x < g[1] - 1; x += 4) {
      s += '<circle cx="' + x + '" cy="759" r="1.500" fill="none" stroke="#800020" stroke-width="1"/>';
    }
    s += '<rect x="' + (g[0] + .5) + '" y="755.500" width="' + (g[1] - g[0] - 1) + '" height="7" fill="none" stroke="#ff0000" shape-rendering="crispEdges"/>';
  });
  document.getElementById('sigplot').innerHTML = s;

  var sa = '';
  [['1',653],['0',758]].forEach(function (p) { sa += rect(1254, p[1], 3, 1, '#fff') + text(1259, p[1] + 4, p[0], 'axislabel'); });
  document.getElementById('sigaxis').innerHTML = sa;

  /* ---------- time axis ---------- */
  var dates = ['4 Jul 2023','26 Jul 2023','17 Aug 2023','8 Sep 2023','2 Oct 2023','24 Oct 2023','15 Nov 2023','7 Dec 2023','2 Jan 2024','24 Jan 2024','15 Feb 2024','8 Mar 2024','2 Apr 2024','24 Apr 2024','16 May 2024','7 Jun 2024','1 Jul 2024','23 Jul 2024'];
  var xa = '';
  dates.forEach(function (t, i) {
    var x = 6 + 64 * i;
    xa += rect(x, 766, 1, 3, '#fff') + text(x - 1, 778, t, 'datelabel');
  });
  document.getElementById('xaxis').innerHTML = xa;

  /* ---------- connection bars ---------- */
  var cb = '';
  for (var b = 0; b < 8; b++) {
    var h = 5 + b * 1.2;
    cb += rect(b * 3, 14 - h, 2, h, '#123a6a') + rect(b * 3, 1, 2, 13 - h, '#6a7f00');
  }
  document.getElementById('conn').innerHTML = cb;
})();
```
